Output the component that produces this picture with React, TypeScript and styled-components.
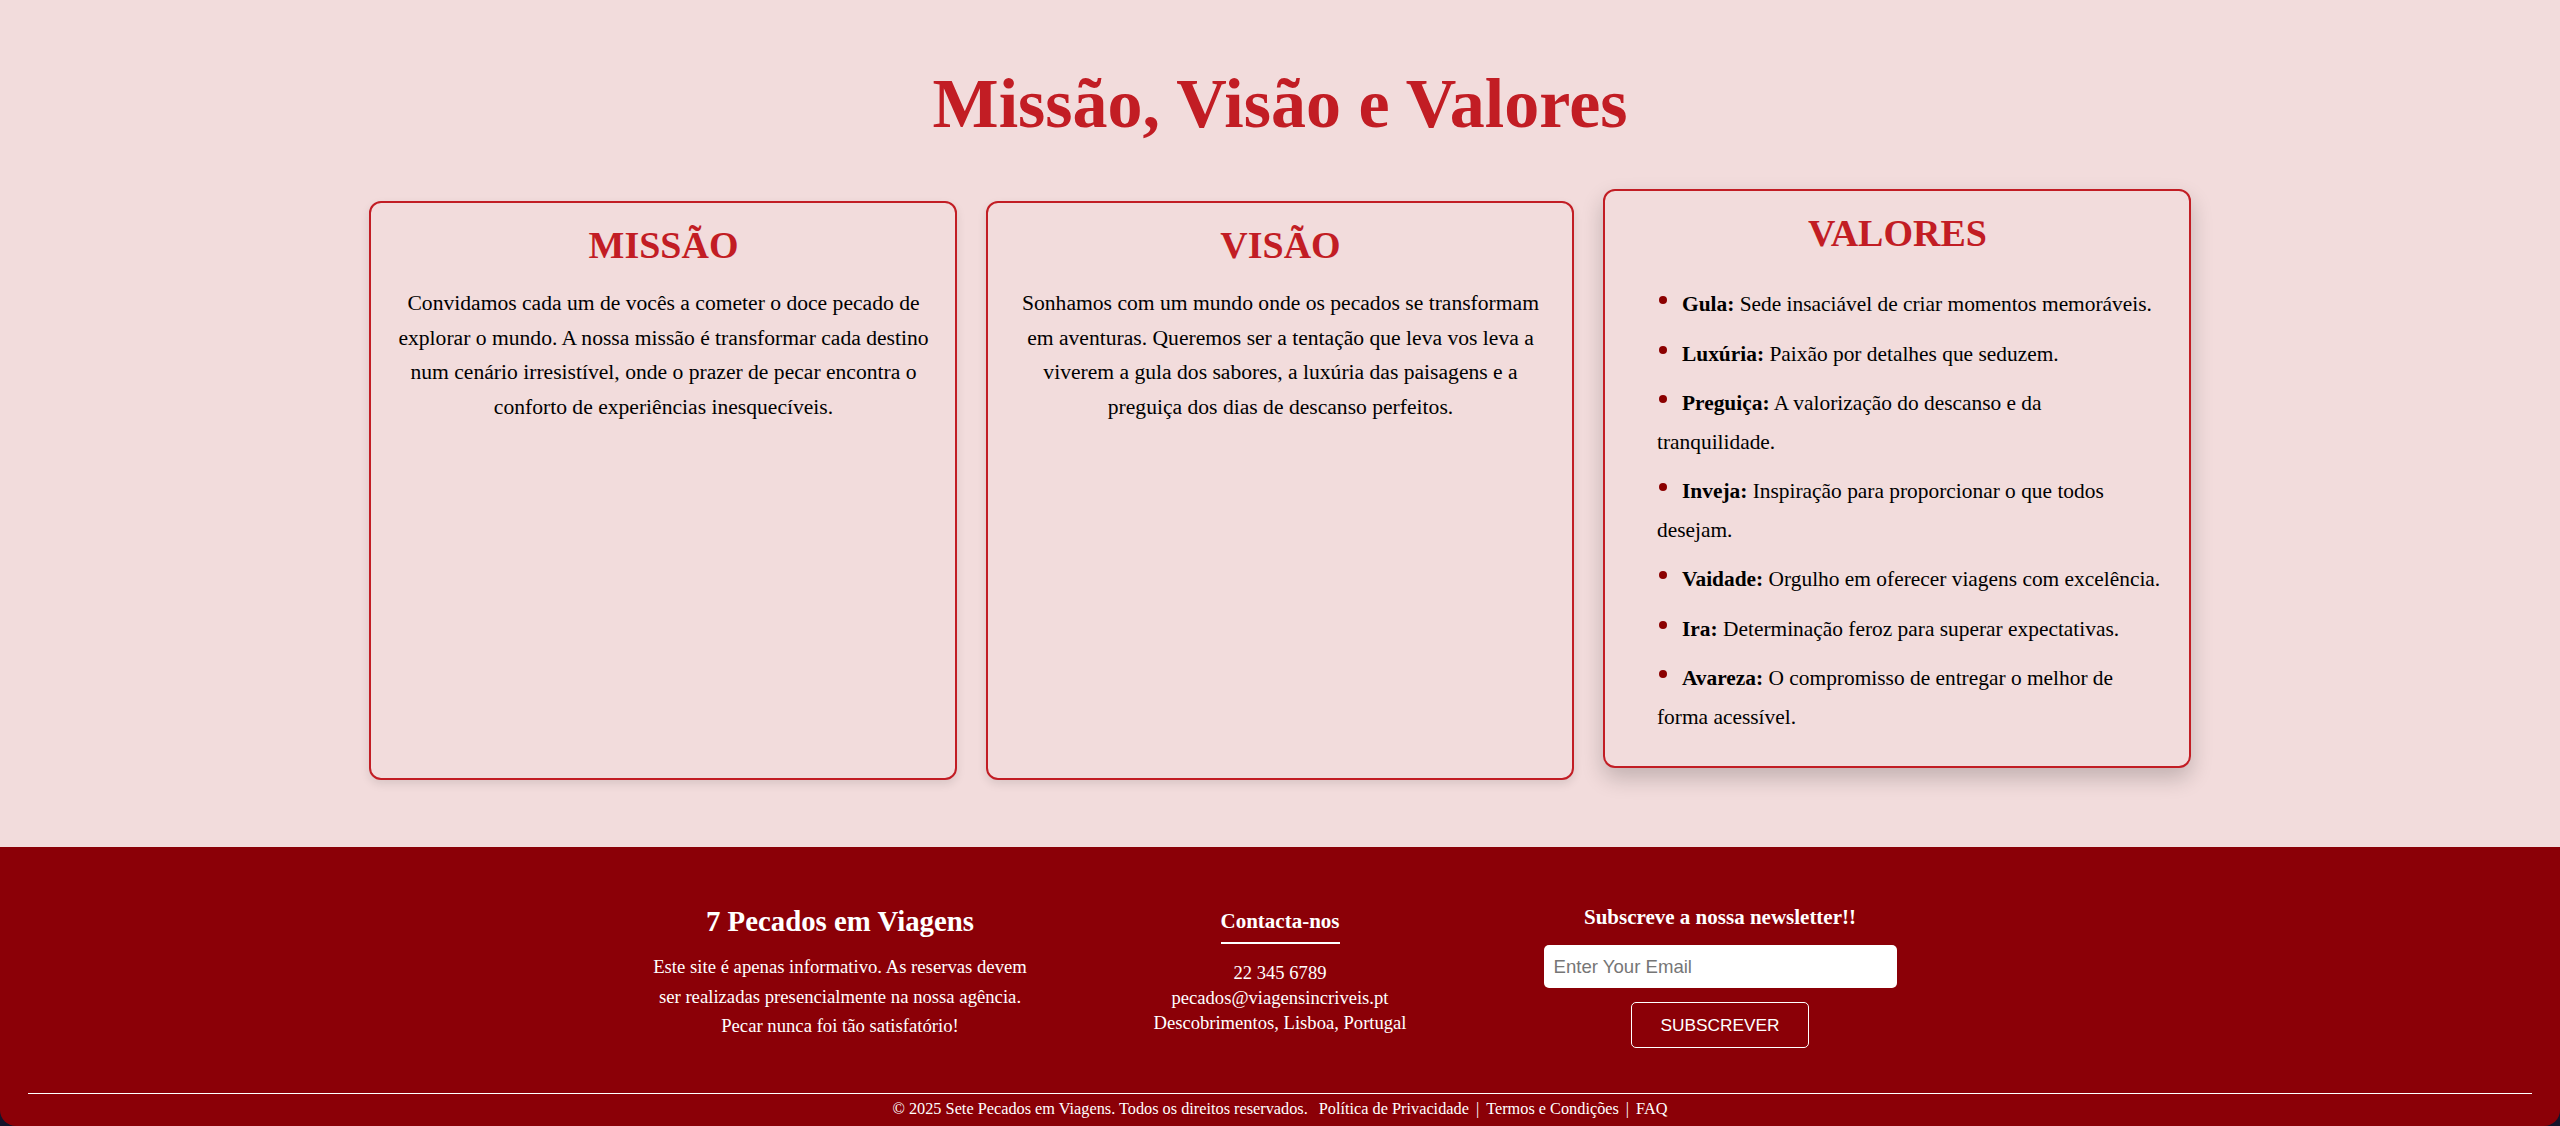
import React from "react";
import styled, { createGlobalStyle } from "styled-components";

const GlobalStyle = createGlobalStyle`
  html, body {
    margin: 0;
    padding: 0;
    background: #14142b;
  }
  * { box-sizing: border-box; }
`;

const Page = styled.div`
  width: 2560px;
  height: 1126px;
  display: flex;
  flex-direction: column;
  border-radius: 0 0 16px 16px;
  overflow: hidden;
  font-family: "Liberation Serif", "Times New Roman", serif;
`;

const Section = styled.section`
  background: #f2dcdc;
  padding: 64px 0 67px;
  display: flex;
  flex-direction: column;
  align-items: center;
`;

const Title = styled.h1`
  margin: 0 0 57px;
  font-size: 70px;
  font-weight: 700;
  color: #c21d24;
  line-height: normal;
  text-align: center;
`;

const CardRow = styled.div`
  display: grid;
  grid-template-columns: repeat(3, 588px);
  gap: 29px;
  justify-content: center;
  align-items: stretch;
`;

const Card = styled.div<{ $raised?: boolean }>`
  border: 2px solid #c21d24;
  border-radius: 12px;
  padding: 20px 24px 19px 25px;
  background: #f2dcdc;
  box-shadow: ${(p) =>
    p.$raised ? "0 10px 22px rgba(0,0,0,0.2)" : "0 4px 10px rgba(0,0,0,0.1)"};
  transform: ${(p) => (p.$raised ? "translateY(-12px)" : "none")};
`;

const CardTitle = styled.h2`
  margin: 0 0 19px;
  font-size: 38px;
  font-weight: 700;
  line-height: normal;
  color: #c21d24;
  text-align: center;
`;

const CardText = styled.p`
  margin: 0;
  font-size: 21.6px;
  line-height: 1.6;
  color: #000;
  text-align: center;
`;

const ValueList = styled.ul`
  margin: 30px 0 0;
  padding: 0 0 0 27px;
  list-style: none;
`;

const ValueItem = styled.li`
  font-size: 21.4px;
  line-height: 1.8;
  margin-bottom: 11px;
  color: #000;

  &::before {
    content: "";
    display: inline-block;
    width: 8px;
    height: 8px;
    border-radius: 50%;
    background: #8b0000;
    margin: 0 15px 0 2px;
    vertical-align: 7px;
  }

  strong {
    font-weight: 700;
  }
`;

const Footer = styled.footer`
  flex: 1;
  background: #8b0007;
  color: #fff;
  padding: 58px 28px 0;
  display: flex;
  flex-direction: column;
`;

const FooterColumns = styled.div`
  display: grid;
  grid-template-columns: repeat(3, 440px);
  justify-content: center;
  align-items: start;
`;

const FooterCol = styled.div<{ $offset?: number }>`
  padding: ${(p) => p.$offset ?? 0}px 30px 0;
  display: flex;
  flex-direction: column;
  align-items: center;
  text-align: center;
`;

const BrandTitle = styled.h3`
  margin: 0 0 14px;
  font-size: 28.8px;
  font-weight: 700;
  line-height: normal;
`;

const FooterText = styled.p`
  margin: 0;
  font-size: 18.7px;
  line-height: 29.5px;
`;

const ContactTitle = styled.h3`
  display: inline-block;
  margin: 0 0 16px;
  padding-bottom: 8px;
  border-bottom: 2px solid #fff;
  font-size: 21px;
  font-weight: 700;
  line-height: normal;
`;

const ContactLine = styled.p`
  margin: 0;
  font-size: 18.6px;
  line-height: 25px;
`;

const NewsTitle = styled.h3`
  margin: 0 0 15px;
  font-size: 21px;
  font-weight: 700;
  line-height: normal;
`;

const EmailInput = styled.input`
  width: 353px;
  height: 43px;
  border: none;
  border-radius: 5px;
  padding: 0 10px;
  font-family: "Liberation Sans", Arial, sans-serif;
  font-size: 18.6px;
  background: #fff;
  color: #222;
  outline: none;

  &::placeholder {
    color: #767676;
  }
`;

const SubscribeButton = styled.button`
  margin-top: 14px;
  height: 46px;
  padding: 0 28px;
  background: transparent;
  border: 1px solid #fff;
  border-radius: 5px;
  color: #fff;
  font-family: "Liberation Sans", Arial, sans-serif;
  font-size: 17.3px;
  cursor: pointer;
`;

const Divider = styled.hr`
  width: 100%;
  margin: 45px 0 0;
  border: none;
  border-top: 1px solid #fff;
`;

const Copyright = styled.p`
  margin: 5px 0 0;
  font-size: 16.3px;
  line-height: normal;
  text-align: center;
`;

const FooterLink = styled.a`
  color: #fff;
  text-decoration: none;
`;

const Sep = styled.span`
  margin: 0 7px;
`;

const Lead = styled.span`
  margin-right: 11px;
`;

const values: [string, string][] = [
  ["Gula:", "Sede insaciável de criar momentos memoráveis."],
  ["Luxúria:", "Paixão por detalhes que seduzem."],
  ["Preguiça:", "A valorização do descanso e da tranquilidade."],
  ["Inveja:", "Inspiração para proporcionar o que todos desejam."],
  ["Vaidade:", "Orgulho em oferecer viagens com excelência."],
  ["Ira:", "Determinação feroz para superar expectativas."],
  ["Avareza:", "O compromisso de entregar o melhor de forma acessível."],
];

export default function App() {
  return (
    <>
      <GlobalStyle />
      <Page>
        <Section>
          <Title>Missão, Visão e Valores</Title>
          <CardRow>
            <Card>
              <CardTitle>MISSÃO</CardTitle>
              <CardText>
                Convidamos cada um de vocês a cometer o doce pecado de explorar o
                mundo. A nossa missão é transformar cada destino num cenário
                irresistível, onde o prazer de pecar encontra o conforto de
                experiências inesquecíveis.
              </CardText>
            </Card>
            <Card>
              <CardTitle>VISÃO</CardTitle>
              <CardText>
                Sonhamos com um mundo onde os pecados se transformam em aventuras.
                Queremos ser a tentação que leva vos leva a viverem a gula dos
                sabores, a luxúria das paisagens e a preguiça dos dias de descanso
                perfeitos.
              </CardText>
            </Card>
            <Card $raised>
              <CardTitle>VALORES</CardTitle>
              <ValueList>
                {values.map(([label, text]) => (
                  <ValueItem key={label}>
                    <strong>{label}</strong> {text}
                  </ValueItem>
                ))}
              </ValueList>
            </Card>
          </CardRow>
        </Section>
        <Footer>
          <FooterColumns>
            <FooterCol>
              <BrandTitle>7 Pecados em Viagens</BrandTitle>
              <FooterText>
                Este site é apenas informativo. As reservas devem ser realizadas
                presencialmente na nossa agência. Pecar nunca foi tão satisfatório!
              </FooterText>
            </FooterCol>
            <FooterCol $offset={4}>
              <ContactTitle>Contacta-nos</ContactTitle>
              <ContactLine>22 345 6789</ContactLine>
              <ContactLine>pecados@viagensincriveis.pt</ContactLine>
              <ContactLine>Descobrimentos, Lisboa, Portugal</ContactLine>
            </FooterCol>
            <FooterCol>
              <NewsTitle>Subscreve a nossa newsletter!!</NewsTitle>
              <EmailInput type="email" placeholder="Enter Your Email" />
              <SubscribeButton>SUBSCREVER</SubscribeButton>
            </FooterCol>
          </FooterColumns>
          <Divider />
          <Copyright>
            <Lead>© 2025 Sete Pecados em Viagens. Todos os direitos reservados.</Lead>
            <FooterLink href="#">Política de Privacidade</FooterLink>
            <Sep>|</Sep>
            <FooterLink href="#">Termos e Condições</FooterLink>
            <Sep>|</Sep>
            <FooterLink href="#">FAQ</FooterLink>
          </Copyright>
        </Footer>
      </Page>
    </>
  );
}
